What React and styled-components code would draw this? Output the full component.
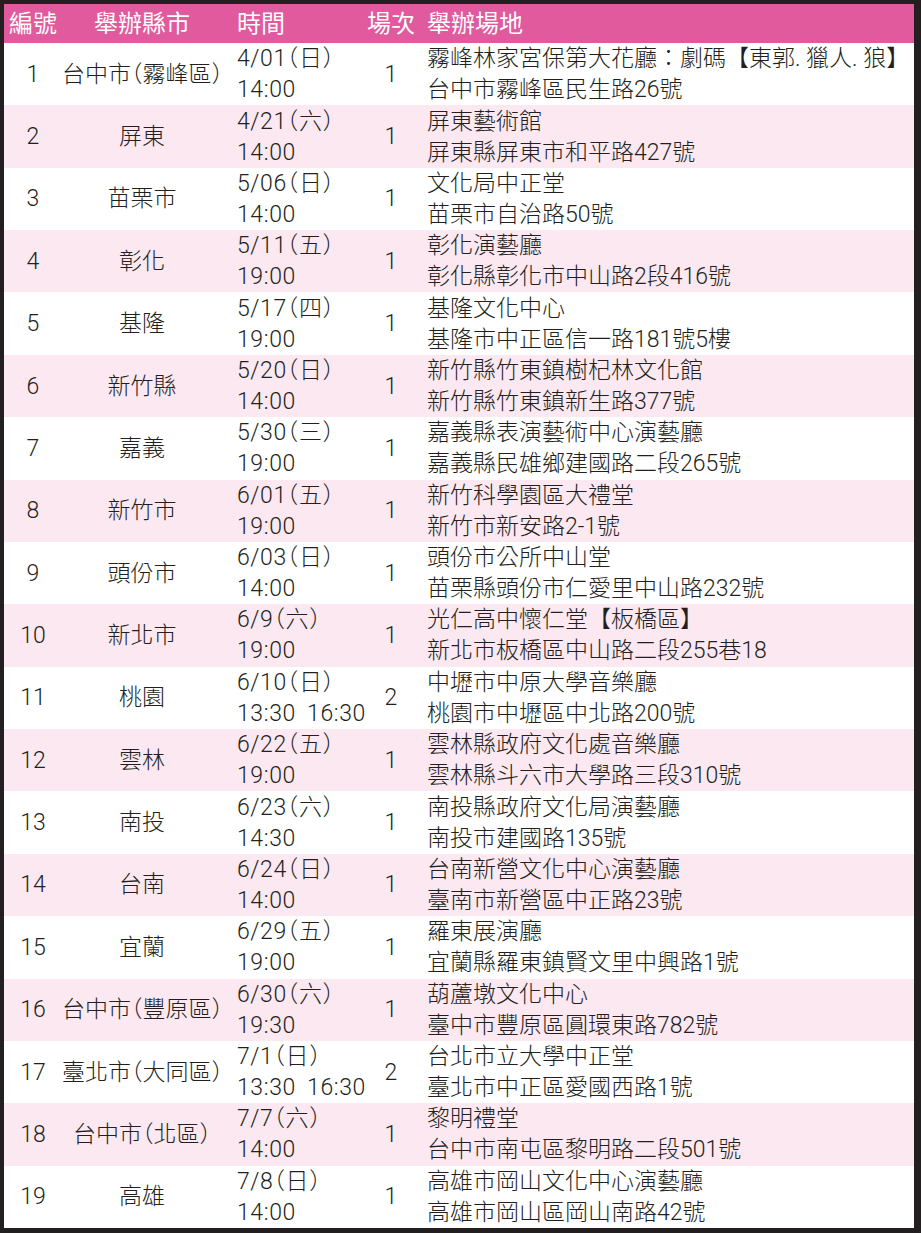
import React from 'react'
import styled, { createGlobalStyle } from 'styled-components'

const GlobalStyle = createGlobalStyle`
  * { box-sizing: border-box; }
  html, body { margin: 0; padding: 0; background: #fff; }
  body {
    font-family: "Liberation Sans", "Noto Sans CJK TC", sans-serif;
    color: #231f20;
  }
`

const Frame = styled.div`
  width: 921px;
  height: 1233px;
  display: flex;
  flex-direction: column;
  border-style: solid;
  border-color: #231f20;
  border-width: 4px 7px 5px 4px;
  background: #fff;
`

const Columns = styled.div`
  display: grid;
  grid-template-columns: 58px 160px 145px 48px 1fr;
  align-items: center;
`

const HeaderRow = styled(Columns)`
  height: 39px;
  background: #e05a9d;
  color: #fff;
  font-size: 24px;
  line-height: 39px;
`

const HeadCell = styled.div`
  text-align: ${(p) => (p.left ? 'left' : 'center')};
  padding-left: ${(p) => p.pad || 0}px;
  white-space: nowrap;
`

const Body = styled.div`
  flex: 1;
  display: grid;
  grid-template-rows: repeat(19, 1fr);
`

const Row = styled(Columns)`
  background: ${(p) => (p.shade ? '#fbe8f1' : '#fff')};
  font-family: Roboto, "Noto Sans CJK TC", sans-serif;
  font-size: 23px;
  font-weight: 300;
`

// halt: half-width CJK brackets, as the print layout does for （ ）
const Cell = styled.div`
  text-align: ${(p) => (p.left ? 'left' : 'center')};
  padding-left: ${(p) => p.pad || 0}px;
  white-space: nowrap;
  line-height: 31px;
  font-feature-settings: ${(p) => (p.halt ? '"halt" 1' : 'normal')};
`

const TimeCell = styled(Cell)`
  letter-spacing: 0.6px;
  word-spacing: 5px;
`

const rows = [
  ['1', '台中市（霧峰區）', '4/01（日）', '14:00', '1', '霧峰林家宮保第大花廳：劇碼【東郭. 獵人. 狼】', '台中市霧峰區民生路26號'],
  ['2', '屏東', '4/21（六）', '14:00', '1', '屏東藝術館', '屏東縣屏東市和平路427號'],
  ['3', '苗栗市', '5/06（日）', '14:00', '1', '文化局中正堂', '苗栗市自治路50號'],
  ['4', '彰化', '5/11（五）', '19:00', '1', '彰化演藝廳', '彰化縣彰化市中山路2段416號'],
  ['5', '基隆', '5/17（四）', '19:00', '1', '基隆文化中心', '基隆市中正區信一路181號5樓'],
  ['6', '新竹縣', '5/20（日）', '14:00', '1', '新竹縣竹東鎮樹杞林文化館', '新竹縣竹東鎮新生路377號'],
  ['7', '嘉義', '5/30（三）', '19:00', '1', '嘉義縣表演藝術中心演藝廳', '嘉義縣民雄鄉建國路二段265號'],
  ['8', '新竹市', '6/01（五）', '19:00', '1', '新竹科學園區大禮堂', '新竹市新安路2-1號'],
  ['9', '頭份市', '6/03（日）', '14:00', '1', '頭份市公所中山堂', '苗栗縣頭份市仁愛里中山路232號'],
  ['10', '新北市', '6/9（六）', '19:00', '1', '光仁高中懷仁堂【板橋區】', '新北市板橋區中山路二段255巷18'],
  ['11', '桃園', '6/10（日）', '13:30 16:30', '2', '中壢市中原大學音樂廳', '桃園市中壢區中北路200號'],
  ['12', '雲林', '6/22（五）', '19:00', '1', '雲林縣政府文化處音樂廳', '雲林縣斗六市大學路三段310號'],
  ['13', '南投', '6/23（六）', '14:30', '1', '南投縣政府文化局演藝廳', '南投市建國路135號'],
  ['14', '台南', '6/24（日）', '14:00', '1', '台南新營文化中心演藝廳', '臺南市新營區中正路23號'],
  ['15', '宜蘭', '6/29（五）', '19:00', '1', '羅東展演廳', '宜蘭縣羅東鎮賢文里中興路1號'],
  ['16', '台中市（豐原區）', '6/30（六）', '19:30', '1', '葫蘆墩文化中心', '臺中市豐原區圓環東路782號'],
  ['17', '臺北市（大同區）', '7/1（日）', '13:30 16:30', '2', '台北市立大學中正堂', '臺北市中正區愛國西路1號'],
  ['18', '台中市（北區）', '7/7（六）', '14:00', '1', '黎明禮堂', '台中市南屯區黎明路二段501號'],
  ['19', '高雄', '7/8（日）', '14:00', '1', '高雄市岡山文化中心演藝廳', '高雄市岡山區岡山南路42號'],
]

export default function App() {
  return (
    <>
      <GlobalStyle />
      <Frame>
        <HeaderRow>
          <HeadCell>編號</HeadCell>
          <HeadCell>舉辦縣市</HeadCell>
          <HeadCell left pad={15}>時間</HeadCell>
          <HeadCell>場次</HeadCell>
          <HeadCell left pad={12}>舉辦場地</HeadCell>
        </HeaderRow>
        <Body>
          {rows.map(([no, city, date, time, count, venue, addr], i) => (
            <Row key={no} shade={i % 2 === 1}>
              <Cell>{no}</Cell>
              <Cell halt>{city}</Cell>
              <TimeCell halt left pad={15}>
                <div>{date}</div>
                <div>{time}</div>
              </TimeCell>
              <Cell>{count}</Cell>
              <Cell left pad={12}>
                <div>{venue}</div>
                <div>{addr}</div>
              </Cell>
            </Row>
          ))}
        </Body>
      </Frame>
    </>
  )
}
